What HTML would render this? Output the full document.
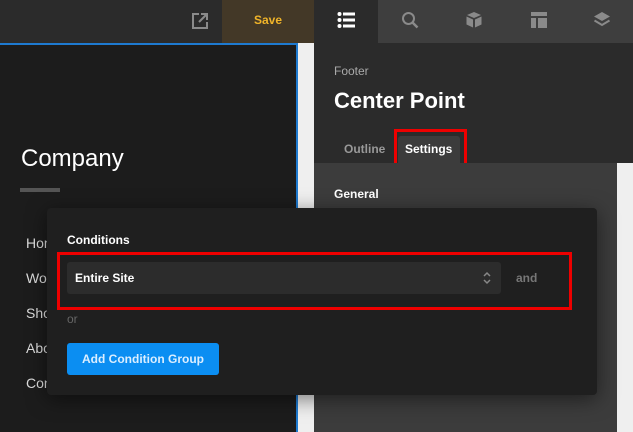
<!DOCTYPE html>
<html><head><style>
*{margin:0;padding:0;box-sizing:border-box}
body{width:633px;height:432px;overflow:hidden;background:#1c1c1c;font-family:"Liberation Sans",sans-serif;position:relative}
.a{position:absolute}
</style></head><body>
<div class="a" style="left:0;top:0;width:222px;height:43px;background:#2b2b2b"></div>
<svg class="a" style="left:190px;top:11px" width="20" height="20" viewBox="0 0 20 20"><path d="M9 3H3v14h14v-6" fill="none" stroke="#8a8a8a" stroke-width="2"/><path d="M11 3h6v6M17 3l-8 8" fill="none" stroke="#8a8a8a" stroke-width="2"/></svg>
<div class="a" style="left:222px;top:0;width:92px;height:43px;background:#433827;color:#f0b429;font-weight:bold;font-size:12px;text-align:center;line-height:40px">Save</div>
<div class="a" style="left:314px;top:0;width:64px;height:43px;background:#2b2b2b"></div>
<div class="a" style="left:378px;top:0;width:255px;height:43px;background:#3e3e3e"></div>
<svg class="a" style="left:337px;top:11px" width="18" height="18" viewBox="0 0 18 18" fill="#fff"><circle cx="2.5" cy="3" r="2"/><circle cx="2.5" cy="9" r="2"/><circle cx="2.5" cy="15" r="2"/><rect x="6" y="1.5" width="12" height="3"/><rect x="6" y="7.5" width="12" height="3"/><rect x="6" y="13.5" width="12" height="3"/></svg>
<svg class="a" style="left:401px;top:11px" width="18" height="18" viewBox="0 0 18 18"><circle cx="7.5" cy="7.5" r="5.5" fill="none" stroke="#8a8a8a" stroke-width="2"/><path d="M11.5 11.5l5 5" stroke="#8a8a8a" stroke-width="2.5"/></svg>
<svg class="a" style="left:465px;top:11px" width="18" height="18" viewBox="0 0 18 18" fill="#8a8a8a"><path d="M9 1l7 3-7 3-7-3z"/><path d="M1.5 5.5l6.5 3v8l-6.5-3z"/><path d="M16.5 5.5l-6.5 3v8l6.5-3z"/></svg>
<svg class="a" style="left:530px;top:11px" width="18" height="18" viewBox="0 0 18 18" fill="#8a8a8a"><rect x="1" y="1" width="16" height="4"/><rect x="1" y="7" width="5" height="10"/><rect x="8" y="7" width="9" height="10"/></svg>
<svg class="a" style="left:593px;top:11px" width="18" height="18" viewBox="0 0 18 18"><path d="M9 1l8 4.5-8 4.5-8-4.5z" fill="#8a8a8a"/><path d="M1.5 9.5L9 14l7.5-4.5" fill="none" stroke="#8a8a8a" stroke-width="2"/></svg>

<div class="a" style="left:0;top:43px;width:298px;height:389px;border-top:2px solid #1e7ad0;border-right:2px solid #1e7ad0;background:#1c1c1c"></div>
<div class="a" style="left:298px;top:43px;width:16px;height:389px;background:#efefef"></div>
<div class="a" style="left:21px;top:145px;color:#fff;font-size:24px">Company</div>
<div class="a" style="left:20px;top:188px;width:40px;height:4px;background:#555"></div>
<div class="a" style="left:26px;top:226px;color:#ddd;font-size:14px;line-height:35px">Home<br>Work<br>Shop<br>About<br>Contact</div>

<div class="a" style="left:314px;top:43px;width:319px;height:120px;background:#2b2b2b"></div>
<div class="a" style="left:334px;top:64px;color:#aaa;font-size:12px">Footer</div>
<div class="a" style="left:334px;top:88px;color:#fff;font-size:22px;font-weight:bold">Center Point</div>
<div class="a" style="left:344px;top:142px;color:#999;font-size:12px;font-weight:bold">Outline</div>
<div class="a" style="left:398px;top:136px;width:62px;height:27px;background:#3c3c3c;border-radius:3px 3px 0 0"></div>
<div class="a" style="left:405px;top:142px;color:#fff;font-size:12px;font-weight:bold">Settings</div>
<div class="a" style="left:394px;top:129px;width:73px;height:40px;border:3px solid #e00"></div>
<div class="a" style="left:314px;top:163px;width:303px;height:269px;background:#3c3c3c"></div>
<div class="a" style="left:617px;top:163px;width:16px;height:269px;background:#efefef"></div>
<div class="a" style="left:334px;top:187px;color:#fff;font-size:12px;font-weight:bold">General</div>

<div class="a" style="left:47px;top:208px;width:550px;height:187px;background:#1f1f1f;border-radius:4px;box-shadow:0 4px 20px rgba(0,0,0,.5)"></div>
<div class="a" style="left:67px;top:233px;color:#fff;font-size:12px;font-weight:bold">Conditions</div>
<div class="a" style="left:67px;top:262px;width:434px;height:32px;background:#2c2c2c;border-radius:3px"></div>
<div class="a" style="left:75px;top:271px;color:#fff;font-size:12px;font-weight:bold">Entire Site</div>
<svg class="a" style="left:482px;top:271px" width="10" height="14" viewBox="0 0 10 14"><path d="M2 5l3-3 3 3M2 9l3 3 3-3" fill="none" stroke="#888" stroke-width="1.5"/></svg>
<div class="a" style="left:516px;top:271px;color:#777;font-size:12px;font-weight:bold">and</div>
<div class="a" style="left:57px;top:252px;width:515px;height:58px;border:3px solid #e00"></div>
<div class="a" style="left:67px;top:312px;color:#666;font-size:12px">or</div>
<div class="a" style="left:67px;top:343px;width:152px;height:32px;background:#0b8ef2;border-radius:3px;color:#dbeeff;font-size:12px;font-weight:bold;text-align:center;line-height:32px">Add Condition Group</div>
</body></html>
